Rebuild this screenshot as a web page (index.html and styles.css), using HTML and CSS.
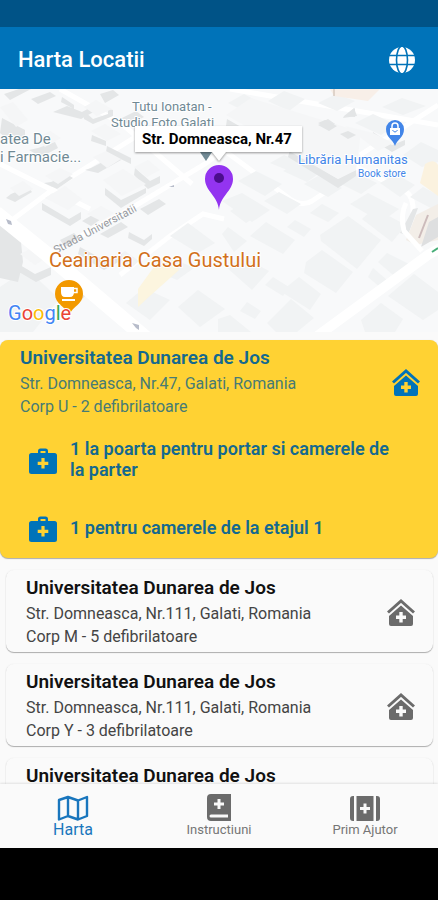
FILE: index.html
```
<!DOCTYPE html>
<html lang="ro">
<head>
  <meta charset="utf-8">
  <meta name="viewport" content="width=device-width, initial-scale=1">
  <title>Harta Locatii</title>
  <link rel="stylesheet" href="styles.css">
</head>
<body>
  <!-- shared icons -->
  <svg class="sprite" aria-hidden="true">
    <symbol id="home-plus" viewBox="0 0 30 28">
      <path d="M2 14.500 15 3l13 11.500" fill="none" stroke="currentColor" stroke-width="3"/>
      <path fill="currentColor" fill-rule="evenodd" d="M15 7.500 27 18v8q0 2-2 2H5q-2 0-2-2V18zM13.300 14v3.500H10v3.400h3.300v3.500h3.400v-3.500H20v-3.400h-3.300V14z"/>
    </symbol>
    <symbol id="kit" viewBox="0 0 28 26">
      <path fill="currentColor" fill-rule="evenodd" d="M9 5V3q0-2.500 2.500-2.500h5Q19 .5 19 3v2h6.500Q28 5 28 7.500v16q0 2.500-2.500 2.500h-23Q0 26 0 23.500v-16Q0 5 2.500 5zM11.500 5h5V3h-5zM12.400 10v3.700H8.700v3.200h3.700v3.700h3.200v-3.700h3.700v-3.200h-3.700V10z"/>
    </symbol>
  </svg>

  <div class="status-bar"></div>
  <header class="app-bar">
    <h1>Harta Locatii</h1>
    <button class="lang" aria-label="Limba">
      <svg viewBox="0 0 26 26" width="26" height="26">
        <circle cx="13" cy="13" r="13" fill="#fff"/>
        <g fill="none" stroke="#0073b9" stroke-width="1.600">
          <ellipse cx="13" cy="13" rx="5.500" ry="14"/>
          <path d="M0 8.500h26M0 17.500h26"/>
        </g>
      </svg>
    </button>
  </header>

  <main>
    <div class="map">
      <svg viewBox="0 0 438 243" preserveAspectRatio="xMidYMid slice">
        <rect width="438" height="243" fill="#f8f9fa"/>
        <!-- side streets -->
        <g fill="none" stroke="#fff" stroke-width="5">
          <path d="M48 165 130 120 205 75 236 52"/>
          <path d="M120 186 170 147 203 125 224 130"/>
          <path d="M225 62 290 110q12 8 22 2l18-12"/>
          <path d="M336 68 405 102q9 5 8 22"/>
          <path d="M360 66 438 16M230 0l208 36M60 0l62 35 70 60"/>
          <path d="M0 75l90 45M0 140l60-45 80-50"/>
        </g>
        <!-- flat blocks -->
        <g fill="#f1f3f4">
          <path d="M238 92l18-10 26 13-17 12zM264 112l15-9 22 12-14 10zM222 112l20-8 28 17-18 12zM283 82l16-9 22 10-14 10zM304 95l14-8 24 12-14 9zM270 74l14-8 20 9-12 8z"/>
          <path d="M331 90l18-9 28 13-16 11zM350 115l18-11 31 16-18 13zM320 146l28-19 33 24-24 29-36-28zM362 130l12-11 32 17-14 17zM310 124l12-9 17 9-11 9z"/>
          <path d="M306 173l16-12 31 22-17 21-32-20zM284 200l15-12 22 17-11 16-30-19zM265 196l8-8 16 10-6 9zM267 234l24-24 23 19-17 14h-21zM240 222l7-9 14 9-6 8zM218 230l12-4 21 17h-33z"/>
          <path d="M226 178l17-10 26 14-17 19zM250 147l16-14 29 18-12 14zM222 145l6-7 19 14-13 11zM287 138l8-7 16 9-7 8zM230 122l12-7 12 14-8 5z"/>
          <path d="M378 173l9-9 22 11-10 16zM368 188l5-9 14 12-6 8zM388 207l26-22 24 18v18l-15 10zM361 231l20-17 22 16-8 13h-30z"/>
          <path d="M154 181l18-12 22 10-17 12zM126 214l18-15 26 12-20 20zM178 218l20-17 27 19-25 18zM170 147l18-13 27 20-17 10zM115 170l10-8 14 10-9 8z"/>
          <path d="M318 14l18-9 19 7-18 10zM268 12l16-10 21 8-16 12zM228 14l16-9 15 8-15 9zM382 18l20-9 24 8-23 9zM355 34l18-9 24 11-16 10zM403 66l18-13 17 8v12l-16 5zM380 94l16-9 19 11-15 12zM410 108l13-10 15 8v17z"/>
          <path d="M0 198l27-18 32 30-26 33H0z"/>
        </g>
        <!-- raised buildings, lighter roofs over grey sides -->
        <g fill="#e4e6e7">
          <path d="M2 29l23 12v9l-12 4-13-10zM53 23l14-6 15 6 15-8v6l-16 9zM84 22l9 8 15-5v-5l5 1v6l-20 8-9-5zM38 59l17-6 3 6-17 9-12-7zM92 46l14 6v5l-15-5zM107 57l24 12v6l-25-12zM91 79l25-13 5 5-23 13-13-3zM51 93l17-7 5 3-16 11-13-6zM62 8l12 8v4l-13-7zM100 5l13-4 6 5-14 8z"/>
          <path d="M135 79l15 13 10-5v7l-12 6-14-14zM105 99l16 12 25-12v5l-25 15-16-13zM42 114l27 16 12-7v7l-11 7-28-16zM11 105l17-7 4 5-17 10-9-4zM0 132l20 11 3 30-5 20-18-4zM20 176l15 9 16-7v8l-15 7-17-10zM80 158l26 14 16-7v6l-18 10-26-16zM129 143l15 8 8-6v5l-8 7-16-8z"/>
          <path d="M227 30l21 12v6l-22-11zM290 61l48 29 18-9v6l-18 12-50-31zM344 27l10-8 3 8-14 2zM373 43l19 13 13-5v5l-13 7-20-12zM322 33l6-3 10 7-5 3zM302 37l10-5 9 7-9 4z"/>
          <path d="M56 202l20-10 14 9-12 14zM82 132l17-10 8 4-16 11zM100 145l21-12 7 5-20 11zM60 151l14-7 5 5-14 9zM140 120l19-10 7 5-18 11zM31 10l19-7 6 4-18 8zM120 30l16-8 8 6-15 8zM4 5l15-5h12L10 11zM400 144l13-24 5-1-10 27z"/>
        </g>
        <g fill="#f5f6f7">
          <path d="M0 18l13-5 15 18-12 7zM35 49l15-7 11 7-16 9zM84 18l12-7 16 9-15 7zM91 42l14-7 16 10-14 7zM93 68l13-6 15 8-14 9zM103 91l20-11 23 15-24 12zM134 78l14-7 12 10-13 7zM45 109l20-12 17 13-14 11zM45 87l15-8 13 6-15 10zM10 99l13-7 10 8-14 7zM87 125l14-8 13 7-13 8zM20 165l17-9 14 10-16 10z"/>
          <path d="M226 26l25-17 110 34-5 38-18 9zM345 37l28 7 20 10-15 8z"/>
        </g>
        <g fill="#e3e5e6">
          <path d="M318 36l8-4 11 5-8 5zM340 45l8-3 8 4-8 4zM345 27l10-8v9zM325 31l10 4-7 4-10-5z"/>
        </g>
        <path d="M406 151l10-25 22-11v36l-22 5z" fill="#f3eee8"/>
        <path d="M425 75q9-6 13 1v31l-18-13z" fill="#fbf2df"/>
        <path d="M330 0h50l-12 12-34-5z" fill="#f8efe8"/>
        <path d="M138 200l21-29 12-2 8 12-28 25-13 12z" fill="#fcf5df"/>
        <path d="M421 158l8-25 9-5v20z" fill="#dedfe0"/>
        <path d="M419 149l9-23" stroke="#cbb" stroke-width="2"/>
        <!-- main streets -->
        <g fill="none" stroke="#fff">
          <path d="M-4 124 48 166 148 251" stroke-width="15"/>
          <path d="M316 248 428 166l14-8" stroke-width="10"/>
          <path d="M406 114q-6 12-2 28l18 20" stroke-width="5"/>
        </g>
        <path d="M432 163l6-4" stroke="#46ad77" stroke-width="2"/>
        <path d="M6 130l5 2 1 4-4-1zM132 234l7 2v5l-3-2zM169 98l5-2v2z" fill="#b7bcca"/>
        <path d="M334 0v7" stroke="#c6b8ac"/>

        <g class="poi grey">
          <text x="132" y="22">Tutu Ionatan -</text>
          <text x="111" y="38">Studio Foto Galati</text>
          <text x="0" y="55" class="mid">atea De</text>
          <text x="0" y="73" class="mid">i Farmacie...</text>
          <path d="M200 63h12l-6 9z"/>
        </g>
        <text class="street" transform="translate(56 165) rotate(-28)">Strada Universitatii</text>
        <g class="poi blue">
          <path d="M395 57c-2-7-9-8-9-17a9 9 0 0 1 18 0c0 9-7 10-9 17z"/>
          <path d="M390 39h10v7h-10z" fill="#fff"/>
          <path d="M392 39v-2a3 3 0 0 1 6 0v2" fill="none" stroke="#fff" stroke-width="1.500"/>
          <path d="M392.500 41q2.500 4 5 0" fill="none" stroke="#4285e8"/>
          <text x="298" y="75" class="shop">Librăria Humanitas</text>
          <text x="358" y="88" class="kind">Book store</text>
        </g>
        <text class="poi cafe" x="49" y="178">Ceainaria Casa Gustului</text>
        <path d="M69 226c-4-9-14-11-14-21a14 14 0 0 1 28 0c0 10-10 12-14 21z" fill="#f29900"/>
        <path d="M61 198h13v5q0 5-4 5h-5q-4 0-4-5zM62 210h13v2H62z" fill="#fff"/>
        <path d="M74 199.500h3v4h-4" fill="none" stroke="#fff" stroke-width="1.500"/>
        <text class="google" x="8" y="231"><tspan fill="#4285f4">G</tspan><tspan fill="#ea4335">o</tspan><tspan fill="#fbbc04">o</tspan><tspan fill="#4285f4">g</tspan><tspan fill="#34a853">l</tspan><tspan fill="#ea4335">e</tspan></text>

        <!-- selected marker and its label -->
        <path class="bubble" d="M135 37h167v26h-76l-7 9-7-9h-77z"/>
        <text class="bubble-text" x="142" y="55">Str. Domneasca, Nr.47</text>
        <path d="M219 121c-1-14-14-19-14-31a14 14 0 0 1 28 0c0 12-13 17-14 31z" fill="#9334f0"/>
        <circle cx="219" cy="89" r="5" fill="#4b0d8d"/>
      </svg>
    </div>

    <section class="locations">
      <article class="card active">
        <div class="card-head">
          <div>
            <h2>Universitatea Dunarea de Jos</h2>
            <p>Str. Domneasca, Nr.47, Galati, Romania</p>
            <p>Corp U - 2 defibrilatoare</p>
          </div>
          <svg class="home"><use href="#home-plus"/></svg>
        </div>
        <ul>
          <li><svg class="kit"><use href="#kit"/></svg><span>1 la poarta pentru portar si camerele de la parter</span></li>
          <li><svg class="kit"><use href="#kit"/></svg><span>1 pentru camerele de la etajul 1</span></li>
        </ul>
      </article>
      <article class="card">
        <div class="card-head">
          <div>
            <h2>Universitatea Dunarea de Jos</h2>
            <p>Str. Domneasca, Nr.111, Galati, Romania</p>
            <p>Corp M - 5 defibrilatoare</p>
          </div>
          <svg class="home"><use href="#home-plus"/></svg>
        </div>
      </article>
      <article class="card">
        <div class="card-head">
          <div>
            <h2>Universitatea Dunarea de Jos</h2>
            <p>Str. Domneasca, Nr.111, Galati, Romania</p>
            <p>Corp Y - 3 defibrilatoare</p>
          </div>
          <svg class="home"><use href="#home-plus"/></svg>
        </div>
      </article>
      <article class="card">
        <div class="card-head">
          <h2>Universitatea Dunarea de Jos</h2>
        </div>
      </article>
    </section>
  </main>

  <nav class="tabs">
    <a href="#harta" class="current">
      <svg viewBox="0 0 32 26" width="32" height="26" fill="none" stroke="currentColor" stroke-width="2.400" stroke-linejoin="round">
        <path d="M2 5 11 2l10 3.500L30 2v19l-9 3.500L11 21l-9 3.500zM11 2v19M21 5.500v19"/>
      </svg>
      <span>Harta</span>
    </a>
    <a href="#instructiuni">
      <svg viewBox="0 0 24 27" width="24" height="27">
        <path fill="currentColor" fill-rule="evenodd" d="M4 0h20v27H4q-4 0-4-4V4q0-4 4-4zM10.500 5v3.500H7v3h3.500V15h3v-3.500H17v-3h-3.500V5zM4 20.500q-1.500 0-1.500 1.500T4 23.500h17v-3z"/>
      </svg>
      <span>Instructiuni</span>
    </a>
    <a href="#prim-ajutor">
      <svg viewBox="0 0 30 25" width="30" height="25">
        <path fill="currentColor" fill-rule="evenodd" d="M3 0h1v25H3q-3 0-3-3V3q0-3 3-3zM26 0h1q3 0 3 3v19q0 3-3 3h-1zM6.500 0h17v25h-17zM13.500 7.500V11H10v3h3.500v3.500h3V14H20v-3h-3.500V7.500z"/>
      </svg>
      <span>Prim Ajutor</span>
    </a>
  </nav>
  <div class="system-bar"></div>
</body>
</html>
```
FILE: styles.css
```
* {
    box-sizing: border-box;
}
body {
    margin: 0;
    height: 100vh;
    display: flex;
    flex-direction: column;
    background: #fafafa;
    color: #111;
    font-family: Roboto, "Liberation Sans", sans-serif;
}
h1, h2, p, ul {
    margin: 0;
    padding: 0;
}
.sprite {
    position: absolute;
    width: 0;
    height: 0;
}
.status-bar {
    flex: none;
    height: 27px;
    background: #005387;
}
.app-bar {
    flex: none;
    height: 62px;
    padding: 3px 23px 0 18px;
    display: flex;
    align-items: center;
    justify-content: space-between;
    background: #0073b9;
    color: #fff;
}
.app-bar h1 {
    font-size: 22px;
    font-weight: 500;
}
.lang {
    display: flex;
    padding: 0;
    border: 0;
    background: none;
}
main {
    flex: 1;
    min-height: 0;
    overflow: hidden;
}

/* map */
.map {
    height: 243px;
}
.map svg {
    display: block;
    width: 100%;
    height: 100%;
}
.poi text, .cafe {
    stroke: #fff;
    stroke-width: 2px;
    stroke-linejoin: round;
    paint-order: stroke;
}
.grey {
    fill: #708994;
    font-size: 13px;
}
.mid {
    font-size: 15px;
}
.blue {
    fill: #4285e8;
}
.shop {
    font-size: 13px;
}
.kind {
    font-size: 10px;
}
.cafe {
    fill: #d2711c;
    font-size: 20px;
}
.street {
    fill: #96999e;
    font-size: 11px;
}
.google {
    font-size: 20px;
    stroke: #fff;
    stroke-width: 2px;
    paint-order: stroke;
}
.bubble {
    fill: #fff;
    filter: drop-shadow(0 1px 1px rgba(0, 0, 0, .4));
}
.bubble-text {
    font-size: 15px;
    font-weight: 700;
}

/* list */
.locations {
    padding-top: 8px;
    display: flex;
    flex-direction: column;
    gap: 12px;
}
.card {
    margin: 0 5px 0 6px;
    padding: 6px 17px 4px 20px;
    border-radius: 8px;
    background: #fafafa;
    box-shadow: 0 1px 1px rgba(0, 0, 0, .3), 0 0 2px rgba(0, 0, 0, .06);
}
.card.active {
    margin: 0;
    padding-bottom: 10px;
    background: #ffd233;
    color: #14698f;
}
.card-head {
    display: flex;
    align-items: center;
    justify-content: space-between;
}
.card h2 {
    margin-bottom: 2px;
    font-size: 19px;
    line-height: 24px;
    font-weight: 600;
}
.card p {
    font-size: 16px;
    line-height: 23px;
    color: #444;
}
.card.active p {
    color: #477b75;
}
.home {
    flex: none;
    width: 30px;
    height: 28px;
    color: #6b6b6b;
}
.active .home, .kit {
    color: #0073b9;
}
.card ul {
    margin-top: 20px;
    display: flex;
    flex-direction: column;
    gap: 26px;
    list-style: none;
}
.card li {
    min-height: 42px;
    padding: 0 24px 0 9px;
    display: flex;
    align-items: center;
    gap: 13px;
    font-size: 18px;
    line-height: 21px;
    font-weight: 600;
}
.kit {
    flex: none;
    width: 28px;
    height: 26px;
    margin-top: 3px;
}

/* bottom navigation */
.tabs {
    flex: none;
    height: 64px;
    display: flex;
    background: #fafafa;
    box-shadow: 0 -1px 2px rgba(0, 0, 0, .1);
    z-index: 1;
}
.tabs a {
    flex: 1;
    padding-bottom: 9px;
    display: flex;
    flex-direction: column;
    align-items: center;
    justify-content: flex-end;
    color: #757575;
    font-size: 13px;
    line-height: 18px;
    text-decoration: none;
}
.tabs a svg {
    color: #6b6b6b;
}
.tabs a.current, .tabs a.current svg {
    color: #1976bd;
}
.tabs a.current {
    font-size: 16px;
}
.system-bar {
    flex: none;
    height: 52px;
    background: #000;
}
```
